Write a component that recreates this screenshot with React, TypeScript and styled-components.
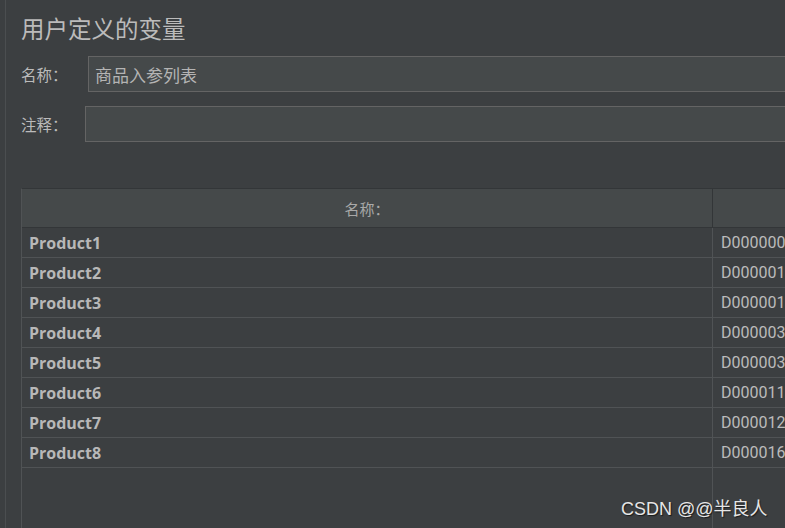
import React from "react";
import styled, { createGlobalStyle } from "styled-components";

const GlobalStyle = createGlobalStyle`
  html, body {
    margin: 0;
    padding: 0;
    background: #3c3f41;
  }
  * {
    box-sizing: border-box;
  }
`;

const Frame = styled.div`
  position: relative;
  display: flex;
  width: 785px;
  height: 528px;
  overflow: hidden;
  background: #3c3f41;
  color: #bbbbbb;
  font-family: "Noto Sans CJK SC", "Noto Sans", sans-serif;
`;

const Gutter = styled.div`
  width: 6px;
  flex-shrink: 0;
  border-right: 1px solid #4b4e50;
`;

const Content = styled.div`
  flex: 1;
  display: flex;
  flex-direction: column;
  padding: 12px 0 0 15px;
  min-width: 0;
`;

const Title = styled.div`
  font-size: 23.5px;
  line-height: 32px;
  height: 32px;
  color: #bbbbbb;
  white-space: nowrap;
`;

const FieldRow = styled.div<{ $top: number }>`
  display: flex;
  align-items: center;
  margin-top: ${(p) => p.$top}px;
  height: 36px;
`;

const Label = styled.div<{ $width: number }>`
  width: ${(p) => p.$width}px;
  flex-shrink: 0;
  font-size: 15.5px;
  color: #bbbbbb;
`;

const Input = styled.div`
  flex: 1;
  height: 36px;
  margin-right: -20px;
  background: #45494a;
  border: 1px solid #646464;
  padding: 0 6px;
  display: flex;
  align-items: center;
  font-size: 17px;
  color: #b4b4b4;
  white-space: nowrap;
`;

const Table = styled.div`
  flex: 1;
  margin-top: 46px;
  margin-right: -200px;
  display: flex;
  flex-direction: column;
  border-top: 1px solid #333638;
  border-left: 1px solid #505355;
`;

const HeaderRow = styled.div`
  display: flex;
  height: 39px;
  background: #45494a;
  border-bottom: 1px solid #333638;
`;

const HeaderCell = styled.div<{ $width: number }>`
  width: ${(p) => p.$width}px;
  flex-shrink: 0;
  display: flex;
  align-items: center;
  justify-content: center;
  font-size: 15px;
  color: #a9a9a9;
  border-right: 1px solid #333638;
`;

const Row = styled.div`
  display: flex;
  height: 30px;
  border-bottom: 1px solid #505355;
`;

const NameCell = styled.div`
  width: 691px;
  flex-shrink: 0;
  padding-left: 7px;
  display: flex;
  align-items: center;
  font-family: "Open Sans", "Noto Sans", sans-serif;
  font-weight: 700;
  font-size: 16px;
  color: #b8b8b8;
  border-right: 1px solid #505355;
`;

const ValueCell = styled.div`
  flex: 1;
  padding-left: 8px;
  display: flex;
  align-items: center;
  font-family: Roboto, "Noto Sans", sans-serif;
  font-size: 16px;
  color: #bbbbbb;
  white-space: nowrap;
`;

const Filler = styled.div`
  flex: 1;
  display: flex;
`;

const FillerCol = styled.div`
  width: 691px;
  border-right: 1px solid #505355;
`;

const Watermark = styled.div`
  position: absolute;
  left: 621px;
  top: 494px;
  font-family: "Liberation Sans", "Noto Sans CJK SC", sans-serif;
  font-size: 18px;
  color: #e6e6e6;
  text-shadow: 1px 1px 1px rgba(0, 0, 0, 0.6);
  white-space: nowrap;
`;

const rows = [
  ["Product1", "D0000000"],
  ["Product2", "D0000010"],
  ["Product3", "D0000011"],
  ["Product4", "D0000030"],
  ["Product5", "D0000031"],
  ["Product6", "D0000110"],
  ["Product7", "D0000120"],
  ["Product8", "D0000160"],
];

export default function App() {
  return (
    <>
      <GlobalStyle />
      <Frame>
        <Gutter />
        <Content>
          <Title>用户定义的变量</Title>
          <FieldRow $top={12}>
            <Label $width={67}>名称：</Label>
            <Input>商品入参列表</Input>
          </FieldRow>
          <FieldRow $top={14}>
            <Label $width={64}>注释：</Label>
            <Input />
          </FieldRow>
          <Table>
            <HeaderRow>
              <HeaderCell $width={691}>名称：</HeaderCell>
              <HeaderCell $width={300} />
            </HeaderRow>
            {rows.map(([name, value]) => (
              <Row key={name}>
                <NameCell>{name}</NameCell>
                <ValueCell>{value}</ValueCell>
              </Row>
            ))}
            <Filler>
              <FillerCol />
            </Filler>
          </Table>
        </Content>
        <Watermark>CSDN @@半良人</Watermark>
      </Frame>
    </>
  );
}
